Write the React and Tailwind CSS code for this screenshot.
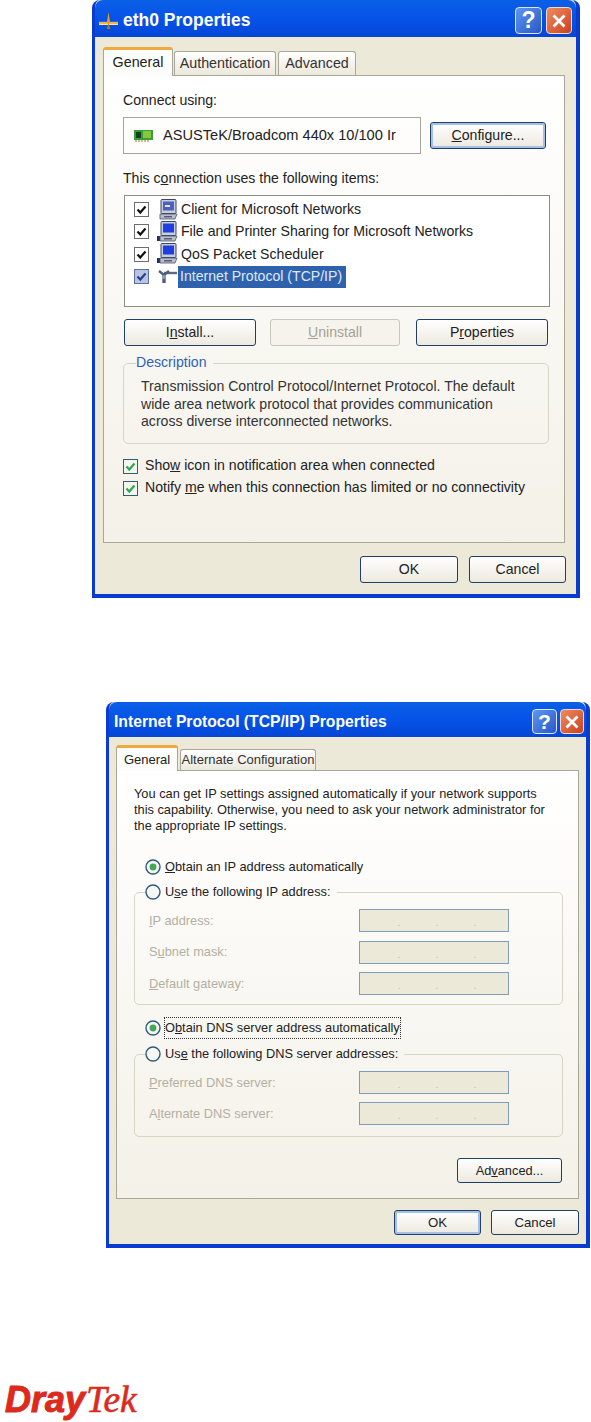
import React from 'react';

const TitleButtons = ({ small }) => (
  <div className={`flex items-center ${small ? 'gap-[3px]' : 'gap-[4px]'}`}>
    <div className={`flex items-center justify-center rounded-[4px] border border-[#dbe6fb] bg-gradient-to-br from-[#5f96ee] to-[#2a57c8] font-bold text-white ${small ? 'h-[25px] w-[25px] text-[21px]' : 'h-[27px] w-[27px] text-[23px]'}`}>?</div>
    <div className={`flex items-center justify-center rounded-[4px] border border-[#f0d8cc] bg-gradient-to-br from-[#ef8a5e] to-[#c9401c] ${small ? 'h-[25px] w-[24px]' : 'h-[27px] w-[26px]'}`}>
      <svg width="16" height="16" viewBox="0 0 16 16">
        <path d="M2.5 2.5 L13.5 13.5 M13.5 2.5 L2.5 13.5" stroke="#fff" strokeWidth="2.8" />
      </svg>
    </div>
  </div>
);

const TitleBar = ({ h, children, small }) => (
  <div className={`flex items-center justify-between rounded-t-[8px] bg-gradient-to-b from-[#0a5fe6] via-[#0653e8] to-[#0446d6] ${h}`}>
    {children}
    <TitleButtons small={small} />
  </div>
);

const NetIcon = () => (
  <svg width="22" height="20" viewBox="0 0 22 20" className="ml-[3px]">
    <path d="M1 12 H20" stroke="#f0b848" strokeWidth="2.4" />
    <path d="M1 13.5 H20" stroke="#f8e8a8" strokeWidth="1" />
    <path d="M10.5 1 L8.8 12 H12.2 Z" fill="#e8a020" />
    <path d="M10.5 12 L8.5 18 H12.5 Z" fill="#a87818" />
  </svg>
);

const Tab = ({ active, className, children }) => (
  <div className={`flex items-center justify-center whitespace-nowrap rounded-t-[3px] border-x border-[#a9a797] ${active
    ? 'z-10 -mb-[1px] border-t-[3px] border-t-[#f0a93c] bg-[#fcfcfa] text-[#222]'
    : 'border-t border-t-[#a9a797] bg-gradient-to-b from-white to-[#ebe8dc] text-[#333]'} ${className}`}>
    {children}
  </div>
);

const Btn = ({ className, primary, disabled, children }) => (
  <div className={`flex items-center justify-center rounded-[3px] border bg-gradient-to-b ${disabled
    ? 'border-[#c9c7ba] from-[#f5f3ec] to-[#f5f3ec] text-[#a5a294]'
    : 'border-[#1f3f68] from-white to-[#ece9df] text-[#222]'} ${primary ? 'shadow-[inset_0_0_0_2px_#a5bfe8]' : ''} ${className}`}>
    {children}
  </div>
);

const Check = ({ green, faded }) => (
  <svg width="15" height="15" viewBox="0 0 15 15" className="shrink-0">
    <rect x="0.5" y="0.5" width="14" height="14" fill={faded ? '#b8c4e0' : green ? '#f4f6f0' : '#fff'} stroke={green ? '#2c6270' : faded ? '#5b6fa8' : '#6d6d6d'} />
    <path d="M3.5 7.5 L6.3 10.5 L11.5 4.5" fill="none" stroke={green ? '#2fa84a' : faded ? '#27408b' : '#111'} strokeWidth="2.2" />
  </svg>
);

const Radio = ({ on }) => (
  <svg width="16" height="16" viewBox="0 0 16 16" className="shrink-0">
    <circle cx="8" cy="8" r="7" fill="#f6f6f2" stroke="#2f5a7c" strokeWidth="1.4" />
    {on && <circle cx="8" cy="8" r="3.4" fill="#43a856" />}
  </svg>
);

const PcIcon = ({ client }) => (
  <svg width="21" height="22" viewBox="0 0 21 22" className="shrink-0">
    {!client && <rect x="0" y="15" width="6" height="5" fill="#23305e" />}
    <rect x="4" y="0.5" width="15" height="14" rx="1" fill="#c9cfda" stroke="#3a4568" />
    <rect x="6" y="2.5" width="11" height="9" fill={client ? '#4d5fc0' : '#1f3fe0'} />
    {client && <rect x="8" y="6" width="5" height="2" fill="#dfe6ff" />}
    <path d="M3 15 H20 L18 20 H3 Z" fill="#b9bfca" stroke="#4a526c" strokeWidth="0.8" />
    <rect x="7" y="17" width="8" height="1.5" fill="#565e7a" />
  </svg>
);

const ProtoIcon = () => (
  <svg width="21" height="18" viewBox="0 0 21 18" className="shrink-0">
    <path d="M7 5 H20" stroke="#5b6a7c" strokeWidth="2.4" />
    <path d="M2 3 L7 7 L12 3" fill="none" stroke="#4e5f74" strokeWidth="2.4" />
    <path d="M7 7 V15" stroke="#4e5f74" strokeWidth="3.4" />
    <circle cx="7" cy="9" r="2" fill="#8fa0b5" />
  </svg>
);

const CardIcon = () => (
  <svg width="21" height="16" viewBox="0 0 21 16" className="shrink-0">
    <rect x="1" y="2" width="19" height="10" fill="#3f9a3a" />
    <rect x="3" y="4" width="5" height="6" fill="#12401a" />
    <rect x="10" y="3" width="8" height="7" fill="#86c73f" />
    <path d="M3 12 V14 M6 12 V14 M9 12 V14 M12 12 V14 M15 12 V14" stroke="#8a7a20" />
  </svg>
);

const ListRow = ({ icon, selected, children }) => (
  <div className="flex h-[22.3px] items-center">
    <div className="ml-[9px] w-[23px]"><Check faded={selected} /></div>
    <div className="w-[21px]">{icon}</div>
    <span className={selected ? 'flex h-[22px] items-center bg-[#2f62ad] pl-[2px] pr-[4px] text-[#dfe8f8]' : 'ml-[3px] text-[#222]'}>{children}</span>
  </div>
);

const IpField = ({ label }) => (
  <div className="flex h-[23px] items-center text-[#b3b0a3]">
    <span className="w-[210px]">{label}</span>
    <div className="flex h-[23px] w-[150px] items-end justify-around border border-[#7f9db9] bg-[#ece9d8] pb-[3px] pl-[20px] pr-[14px] text-[10px] leading-none text-[#bdb9a8]">
      <span>.</span><span>.</span><span>.</span>
    </div>
  </div>
);

const Group = ({ legend, className, children }) => (
  <fieldset className={`rounded-[5px] border border-[#d6d6c6] ${className}`}>
    <legend className="flex h-[18px] items-center pr-[6px]">{legend}</legend>
    {children}
  </fieldset>
);

const EthWindow = () => (
  <div className="ml-[92px] h-[598px] w-[488px] rounded-t-[8px] border-x-0 border-t-0 border-b-[4px] border-l-[3px] border-r-[4px] border-[#0a3bd0] bg-[#ece9d8]">
    <TitleBar h="h-[37px] pr-[4px] pt-[4px]">
      <div className="flex items-center gap-[3px]">
        <NetIcon />
        <span className="text-[17.5px] font-bold text-white">eth0 Properties</span>
      </div>
    </TitleBar>

    <div className="ml-[8px] mt-[10px] flex items-end gap-[1px] text-[14.3px]">
      <Tab active className="h-[29px] w-[70px]">General</Tab>
      <Tab className="h-[24px] w-[102px]">Authentication</Tab>
      <Tab className="ml-[1px] h-[24px] w-[78px]">Advanced</Tab>
    </div>

    <div className="ml-[8px] h-[468px] w-[462px] border border-[#a9a797] bg-gradient-to-b from-white to-[#f4f1e8] pl-[19px] text-[#222]">
      <div className="mt-[16px] flex h-[18px] items-center">Connect using:</div>
      <div className="mt-[7px] flex items-center gap-[9px]">
        <div className="flex h-[37px] w-[298px] items-center gap-[9px] border border-[#a3a69b] pl-[9px]">
          <CardIcon />
          <span className="text-[14.6px]">ASUSTeK/Broadcom 440x 10/100 Ir</span>
        </div>
        <Btn primary className="h-[27px] w-[116px]"><span><u>C</u>onfigure...</span></Btn>
      </div>
      <div className="mt-[16px] flex h-[18px] items-center">This c<u>o</u>nnection uses the following items:</div>
      <div className="ml-[1px] mt-[7px] h-[112px] w-[426px] border border-[#8a8d84] bg-white pt-[2.5px]">
        <ListRow icon={<PcIcon client />}>Client for Microsoft Networks</ListRow>
        <ListRow icon={<PcIcon />}>File and Printer Sharing for Microsoft Networks</ListRow>
        <ListRow icon={<PcIcon />}>QoS Packet Scheduler</ListRow>
        <ListRow icon={<ProtoIcon />} selected>Internet Protocol (TCP/IP)</ListRow>
      </div>
      <div className="ml-[1px] mt-[12px] flex">
        <Btn className="h-[27px] w-[132px]"><span>I<u>n</u>stall...</span></Btn>
        <Btn disabled className="ml-[14px] h-[27px] w-[130px]"><span><u>U</u>ninstall</span></Btn>
        <Btn className="ml-[16px] h-[27px] w-[132px]"><span>P<u>r</u>operties</span></Btn>
      </div>
      <Group legend={<span className="text-[#2f62b8]">Description</span>} className="mt-[8px] h-[90px] w-[426px] pl-[12px]">
        <div className="ml-[5px] mt-[6px] leading-[17.5px] text-[#333]">
          <div>Transmission Control Protocol/Internet Protocol. The default</div>
          <div>wide area network protocol that provides communication</div>
          <div>across diverse interconnected networks.</div>
        </div>
      </Group>
      <div className="mt-[13px] flex h-[18px] items-center gap-[7px]">
        <Check green /><span>Sho<u>w</u> icon in notification area when connected</span>
      </div>
      <div className="mt-[4px] flex h-[18px] items-center gap-[7px]">
        <Check green /><span>Notify <u>m</u>e when this connection has limited or no connectivity</span>
      </div>
    </div>

    <div className="mt-[13px] flex justify-end gap-[11px] pr-[10px]">
      <Btn className="h-[27px] w-[98px]">OK</Btn>
      <Btn className="h-[27px] w-[97px]">Cancel</Btn>
    </div>
  </div>
);

const TcpWindow = () => (
  <div className="ml-[106px] mt-[104px] h-[546px] w-[484px] rounded-t-[8px] border-x-0 border-t-0 border-b-[4px] border-l-[3px] border-r-[4px] border-[#0a3bd0] bg-[#ece9d8]">
    <TitleBar h="h-[35px] pr-[2px] pt-[4px]" small>
      <span className="ml-[5px] text-[15.7px] font-bold text-white">Internet Protocol (TCP/IP) Properties</span>
    </TitleBar>

    <div className="ml-[7px] mt-[8px] flex items-end gap-[2px] text-[13px]">
      <Tab active className="h-[26px] w-[62px]">General</Tab>
      <Tab className="h-[21px] w-[136px]">Alternate Configuration</Tab>
    </div>

    <div className="ml-[7px] h-[429px] w-[463px] border border-[#a9a797] bg-gradient-to-b from-white to-[#f4f1e8] pl-[17px] text-[12.8px] text-[#222]">
      <div className="mt-[15px] leading-[16px]">
        <div>You can get IP settings assigned automatically if your network supports</div>
        <div>this capability. Otherwise, you need to ask your network administrator for</div>
        <div>the appropriate IP settings.</div>
      </div>
      <div className="ml-[11px] mt-[24px] flex h-[18px] items-center gap-[4px]">
        <Radio on /><span><u>O</u>btain an IP address automatically</span>
      </div>
      <Group
        className="mt-[7px] h-[122px] w-[429px] pl-[14px]"
        legend={<div className="-ml-[4px] flex items-center gap-[4px]"><Radio /><span>U<u>s</u>e the following IP address:</span></div>}
      >
        <div className="mt-[8px] flex flex-col gap-[8.5px]">
          <IpField label={<><u>I</u>P address:</>} />
          <IpField label={<>S<u>u</u>bnet mask:</>} />
          <IpField label={<><u>D</u>efault gateway:</>} />
        </div>
      </Group>
      <div className="ml-[11px] mt-[14px] flex h-[18px] items-center gap-[4px]">
        <Radio on /><span className="outline-1 outline-dotted outline-[#333]">O<u>b</u>tain DNS server address automatically</span>
      </div>
      <Group
        className="mt-[8px] h-[92px] w-[429px] pl-[14px]"
        legend={<div className="-ml-[4px] flex items-center gap-[4px]"><Radio /><span>Us<u>e</u> the following DNS server addresses:</span></div>}
      >
        <div className="mt-[8px] flex flex-col gap-[8px]">
          <IpField label={<><u>P</u>referred DNS server:</>} />
          <IpField label={<>A<u>l</u>ternate DNS server:</>} />
        </div>
      </Group>
      <div className="mt-[21px] flex w-[428px] justify-end">
        <Btn className="h-[25px] w-[105px]"><span>Ad<u>v</u>anced...</span></Btn>
      </div>
    </div>

    <div className="mt-[11px] flex justify-end gap-[10px] pr-[7px] text-[13.2px]">
      <Btn primary className="h-[25px] w-[87px]">OK</Btn>
      <Btn className="h-[25px] w-[88px]">Cancel</Btn>
    </div>
  </div>
);

const Logo = () => (
  <div className="ml-[5px] mt-[130px] flex items-baseline text-[36px] leading-[43px] text-[#dc2a1c]">
    <span className="font-['Liberation_Sans'] font-bold italic [-webkit-text-stroke:1px_#dc2a1c]">Dray</span>
    <span className="ml-[1px] font-['Liberation_Serif'] text-[37.5px] italic [-webkit-text-stroke:0.6px_#dc2a1c]">Tek</span>
  </div>
);

export default function App() {
  return (
    <div className="h-[1422px] w-[591px] overflow-hidden bg-white font-['Liberation_Sans',sans-serif] text-[14.1px]">
      <EthWindow />
      <TcpWindow />
      <Logo />
    </div>
  );
}
